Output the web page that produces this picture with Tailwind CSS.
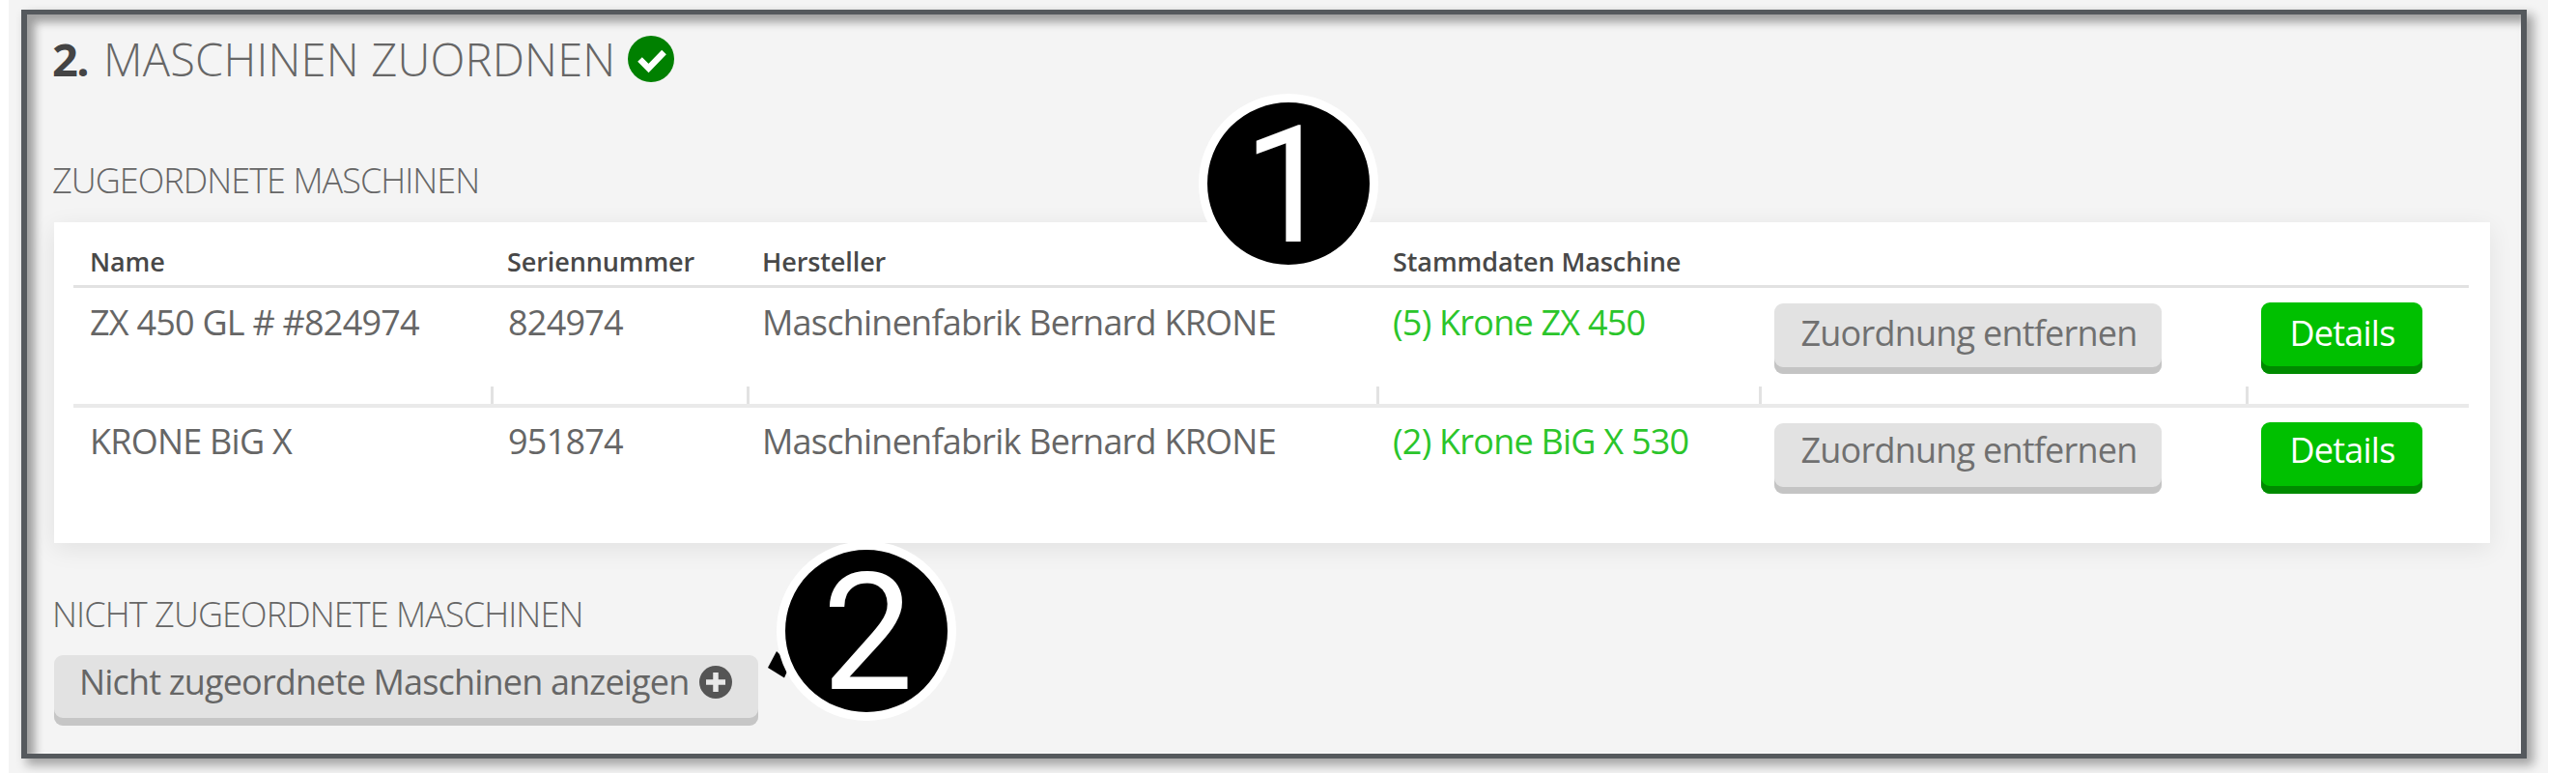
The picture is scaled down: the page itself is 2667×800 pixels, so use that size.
<!DOCTYPE html>
<html lang="de">
<head>
<meta charset="utf-8">
<title>Maschinen zuordnen</title>
<script src="https://cdn.jsdelivr.net/npm/@tailwindcss/browser@4"></script>
</head>
<body class="relative h-[800px] w-[2667px] overflow-hidden bg-white font-['Open_Sans','Noto_Sans',sans-serif] text-[#666]">
<main class="ml-[9px] h-[800px] w-[2629px] bg-[#f4f4f4] pt-[10px] pl-[13px]">
  <section class="h-[775px] w-[2594px] border-x-[6px] border-y-[5px] border-[#55595d] pt-[14px] pl-[27px] shadow-[6px_6px_10px_1px_rgba(0,0,0,0.33),inset_7px_7px_10px_1px_rgba(0,0,0,0.35),inset_-2px_-2px_0_#fbfbfb]">
    <h1 class="-ml-px flex h-[64px] items-center text-[47px] leading-[64px] font-light text-[#666]">
      <b class="w-[53px] font-bold tracking-[-1.5px] text-[#444]">2.</b>
      <span class="tracking-[0.2px] whitespace-nowrap">MASCHINEN ZUORDNEN</span>
      <svg class="ml-[13px] size-[48px]" viewBox="0 0 48 48"><circle cx="24" cy="24" r="24" fill="#008000"/><path d="M12.500 24.500l9 9L37.500 17" fill="none" stroke="#fff" stroke-width="6.5"/></svg>
    </h1>
    <h2 class="-ml-px mt-[74px] h-[40px] text-[36px] leading-[40px] font-light tracking-[-0.95px]">ZUGEORDNETE MASCHINEN</h2>

    <div class="mt-[23px] ml-px h-[332px] w-[2522px] bg-white pt-[20px] pr-[22px] pl-[20px] text-[36px] leading-[40px] tracking-[-0.77px] shadow-[0_6px_24px_rgba(0,0,0,0.08)]">
      <div class="grid h-[48px] grid-cols-[432px_265px_652px_396px_504px_231px] border-b-[3px] border-[#e2e2e2] pt-px text-[27px] font-semibold tracking-[-0.1px] text-[#484848]">
        <div class="pl-[17px]">Name</div>
        <div class="pl-[17px]">Seriennummer</div>
        <div class="pl-[16px]">Hersteller</div>
        <div class="pl-[17px]">Stammdaten Maschine</div>
      </div>

      <div class="grid h-[124px] grid-cols-[432px_265px_652px_396px_504px_231px] border-b-[4px] border-[#eaeaea]">
        <div class="pt-[16px] pl-[17px]">ZX 450 GL # #824974</div>
        <div class="flex flex-col justify-between pt-[16px]"><span class="pl-[18px]">824974</span><i class="h-[18px] w-[3px] bg-[#e2e2e2]"></i></div>
        <div class="flex flex-col justify-between pt-[16px]"><span class="pl-[16px]">Maschinenfabrik Bernard KRONE</span><i class="h-[18px] w-[3px] bg-[#e2e2e2]"></i></div>
        <div class="flex flex-col justify-between pt-[16px]"><a class="pl-[17px] text-[#2bc52b]">(5) Krone ZX 450</a><i class="h-[18px] w-[3px] bg-[#e2e2e2]"></i></div>
        <div class="flex flex-col justify-between pt-[16px]"><button class="ml-[16px] flex h-[73px] w-[401px] justify-center rounded-[9px] bg-[#e2e2e2] pt-[11px] pl-[2px] text-[#707070] shadow-[inset_0_-7px_0_#c4c4c4]">Zuordnung entfernen</button><i class="h-[18px] w-[3px] bg-[#e2e2e2]"></i></div>
        <div class="flex flex-col justify-between pt-[15px]"><button class="ml-[16px] flex h-[74px] w-[167px] justify-center rounded-[9px] bg-[#00c000] pt-[12px] pl-px text-white shadow-[inset_0_-8px_0_#008a00]">Details</button><i class="h-[18px] w-[3px] bg-[#e2e2e2]"></i></div>
      </div>

      <div class="grid h-[124px] grid-cols-[432px_265px_652px_396px_504px_231px]">
        <div class="pt-[15px] pl-[17px]">KRONE BiG X</div>
        <div class="pt-[15px] pl-[18px]">951874</div>
        <div class="pt-[15px] pl-[16px]">Maschinenfabrik Bernard KRONE</div>
        <div class="pt-[15px] pl-[17px]"><a class="text-[#2bc52b]">(2) Krone BiG X 530</a></div>
        <div class="pt-[16px]"><button class="ml-[16px] flex h-[73px] w-[401px] justify-center rounded-[9px] bg-[#e2e2e2] pt-[8px] pl-[2px] text-[#707070] shadow-[inset_0_-7px_0_#c4c4c4]">Zuordnung entfernen</button></div>
        <div class="pt-[15px]"><button class="ml-[16px] flex h-[74px] w-[167px] justify-center rounded-[9px] bg-[#00c000] pt-[9px] pl-px text-white shadow-[inset_0_-8px_0_#008a00]">Details</button></div>
      </div>
    </div>

    <h2 class="-ml-px mt-[54px] h-[40px] text-[36px] leading-[40px] font-light tracking-[-0.9px]">NICHT ZUGEORDNETE MASCHINEN</h2>
    <button class="mt-[22px] ml-px flex h-[73px] w-[729px] rounded-[9px] bg-[#e2e2e2] pt-[8px] pl-[26px] text-[36px] leading-[40px] tracking-[-0.83px] whitespace-nowrap shadow-[inset_0_-8px_0_#c6c6c6]">
      Nicht zugeordnete Maschinen anzeigen
      <svg class="mt-[3px] ml-[11px] size-[34px]" viewBox="0 0 34 34"><circle cx="17" cy="17" r="17" fill="#555"/><path d="M17 7v20M7 17h20" stroke="#e8e8e8" stroke-width="5.5"/></svg>
    </button>
  </section>
</main>

<!-- Numbered callouts -->
<div class="absolute top-[97px] left-[1241px] flex size-[186px] items-center justify-center rounded-full border-[9.5px] border-white bg-black pt-[5px] font-[Roboto] text-[168px] leading-none text-white">1</div>
<svg class="absolute top-[672px] left-[794px] h-[32px] w-[24px]" viewBox="0 0 24 32"><path d="M1 19L10 2L24 16L18 29.500Z"/></svg>
<div class="absolute top-[560px] left-[804px] flex size-[186px] items-center justify-center rounded-full border-[9.5px] border-white bg-black pt-[5px] pl-[3px] font-[Roboto] text-[168px] leading-none text-white">2</div>
</body>
</html>
